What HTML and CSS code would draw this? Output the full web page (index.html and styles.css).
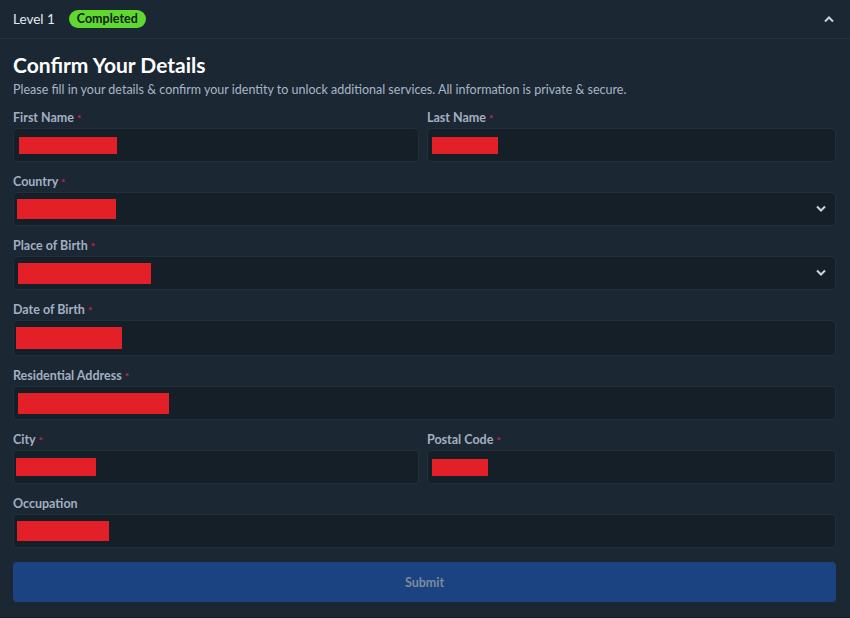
FILE: index.html
```html
<!DOCTYPE html>
<html lang="en">
<head>
  <meta charset="UTF-8">
  <meta name="viewport" content="width=device-width, initial-scale=1.0">
  <title>Confirm Your Details</title>
  <link rel="stylesheet" href="styles.css">
</head>
<body>
<div class="panel">
  <div class="panel-head">
    <span class="level">Level 1</span>
    <span class="badge">Completed</span>
    <svg class="chevron-up" width="12" height="8" viewBox="0 0 12 8"><path d="M2 6.5 L6 2.5 L10 6.5" fill="none" stroke="#c9d3e6" stroke-width="2"/></svg>
  </div>
  <form class="details">
    <h1>Confirm Your Details</h1>
    <p class="intro">Please fill in your details &amp; confirm your identity to unlock additional services. All information is private &amp; secure.</p>

    <div class="row two">
      <div class="field">
        <label>First Name <span class="req">*</span></label>
        <div class="input"><span class="redact" style="width:98px;height:17px;margin-left:5px"></span></div>
      </div>
      <div class="field">
        <label>Last Name <span class="req">*</span></label>
        <div class="input"><span class="redact" style="width:66px;height:17px;margin-left:4px"></span></div>
      </div>
    </div>

    <div class="field">
      <label>Country <span class="req">*</span></label>
      <div class="input select"><span class="redact" style="width:99px;height:20px;margin-left:3px"></span>
        <svg class="chevron" width="12" height="8" viewBox="0 0 12 8"><path d="M2 1.5 L6 5.5 L10 1.5" fill="none" stroke="#c9d3e6" stroke-width="2"/></svg>
      </div>
    </div>

    <div class="field">
      <label>Place of Birth <span class="req">*</span></label>
      <div class="input select"><span class="redact" style="width:133px;height:21px;margin-left:4px"></span>
        <svg class="chevron" width="12" height="8" viewBox="0 0 12 8"><path d="M2 1.5 L6 5.5 L10 1.5" fill="none" stroke="#c9d3e6" stroke-width="2"/></svg>
      </div>
    </div>

    <div class="field">
      <label>Date of Birth <span class="req">*</span></label>
      <div class="input date"><span class="redact" style="width:106px;height:22px;margin-left:2px"></span></div>
    </div>

    <div class="field">
      <label>Residential Address <span class="req">*</span></label>
      <div class="input"><span class="redact" style="width:151px;height:21px;margin-left:4px"></span></div>
    </div>

    <div class="row two">
      <div class="field">
        <label>City <span class="req">*</span></label>
        <div class="input"><span class="redact" style="width:80px;height:18px;margin-left:2px"></span></div>
      </div>
      <div class="field">
        <label>Postal Code <span class="req">*</span></label>
        <div class="input"><span class="redact" style="width:56px;height:17px;margin-left:4px"></span></div>
      </div>
    </div>

    <div class="field">
      <label>Occupation</label>
      <div class="input"><span class="redact" style="width:92px;height:20px;margin-left:3px"></span></div>
    </div>

    <button type="button" class="submit">Submit</button>
  </form>
</div>
</body>
</html>
```

FILE: styles.css
```css
body {
  margin: 0;
  background-color: #131c24;
  font-family: Lato, "Open Sans", sans-serif;
  color: #ffffff;
}
.panel {
  background-color: #1b2834;
  height: 617px;
  box-sizing: border-box;
}
.panel-head {
  height: 38px;
  display: flex;
  align-items: center;
  padding: 0 13px;
  border-bottom: 1px solid #253441;
}
.level {
  font-size: 13.5px;
  color: #e4e9f0;
}
.badge {
  margin-left: 14px;
  background-color: #5fd930;
  color: #10210c;
  font-size: 12.5px;
  font-weight: 700;
  padding: 2px 8px;
  border-radius: 9px;
  line-height: 14px;
}
.chevron-up {
  margin-left: auto;
  margin-right: 2px;
}
.details {
  padding: 14px 14px 15px 13px;
  display: flex;
  flex-direction: column;
  gap: 12px;
}
h1 {
  margin: 0;
  font-size: 21px;
  line-height: 24px;
  font-weight: 700;
}
.intro {
  margin: -7px 0 0 0;
  font-size: 12.5px;
  line-height: 16px;
  color: #a9b5c8;
}
.row.two {
  display: grid;
  grid-template-columns: 406px 1fr;
  gap: 8px;
}
.field {
  display: flex;
  flex-direction: column;
  gap: 2px;
}
label {
  font-size: 12.5px;
  line-height: 16px;
  font-weight: 700;
  color: #a3afc2;
}
.req {
  color: #d21f4b;
  font-size: 10px;
  vertical-align: top;
}
.input {
  height: 34px;
  box-sizing: border-box;
  background-color: #151f28;
  border: 1px solid #222f3b;
  border-radius: 4px;
  display: flex;
  align-items: center;
}
.input.date {
  height: 36px;
}
.redact {
  display: inline-block;
  background-color: #e32027;
}
.chevron {
  margin-left: auto;
  margin-right: 8px;
}
.submit {
  margin-top: 2px;
  height: 40px;
  border: none;
  border-radius: 4px;
  background-color: #1b4281;
  color: #7d8a9c;
  font-family: Lato, "Open Sans", sans-serif;
  font-size: 12.5px;
  font-weight: 700;
}
```
